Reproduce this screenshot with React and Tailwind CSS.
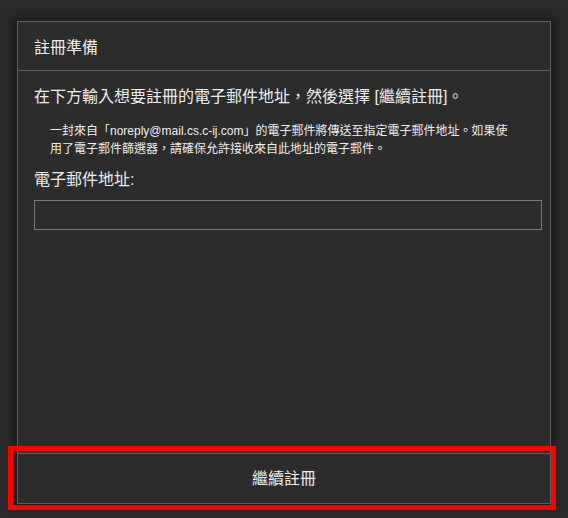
import React from 'react';

export default function App() {
  return (
    <main className="relative h-[518px] w-[568px] overflow-hidden bg-[#2a2a2a] pl-[17px] pt-[21px] font-['Liberation_Sans','Noto_Sans_CJK_TC',sans-serif] text-[#eeeeee]">
      <div className="flex h-[483px] w-[534px] flex-col border border-[#5e5e5e] bg-[#2c2c2c] shadow-[0_0_8px_3px_rgba(0,0,0,0.45)]">
        <header className="flex h-[49px] items-center border-b border-[#5e5e5e] px-4 pt-[3px] text-[16px] leading-6">
          註冊準備
        </header>

        <section className="flex-1 pl-4 pr-2 pt-[14px]">
          <p className="text-[16px] leading-6">
            在下方輸入想要註冊的電子郵件地址，然後選擇 [繼續註冊]。
          </p>
          <p className="mt-[13px] whitespace-nowrap pl-4 text-[12px] leading-[18px]">
            一封來自「noreply@mail.cs.c-ij.com」的電子郵件將傳送至指定電子郵件地址。如果使
            <br />
            用了電子郵件篩選器，請確保允許接收來自此地址的電子郵件。
          </p>
          <label className="mt-[10px] block text-[16px] leading-6">電子郵件地址:</label>
          <input
            type="email"
            className="mt-2 block h-[30px] w-full border border-[#7a7a7a] bg-[#2c2c2c] px-2 text-[14px] text-[#eeeeee] outline-none"
          />
        </section>

        <footer className="flex h-[50px] items-center justify-center border-t border-[#5e5e5e] text-[16px] leading-6">
          <button type="button" className="h-full w-full">繼續註冊</button>
        </footer>
      </div>

      <div className="pointer-events-none absolute left-[8px] top-[446px] h-[64px] w-[548px] border-[5px] border-[#ff0000]" />
    </main>
  );
}
